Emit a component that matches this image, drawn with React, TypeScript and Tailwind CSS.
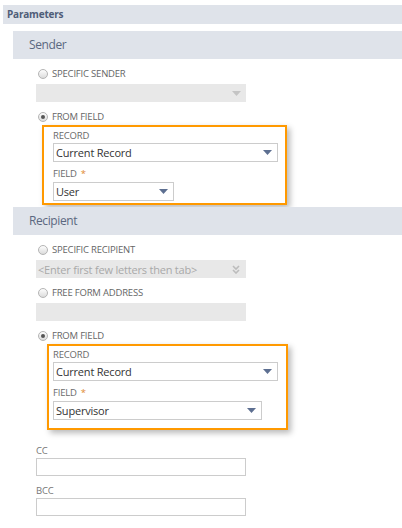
import React from 'react'

const font = { fontFamily: '"Open Sans", "Liberation Sans", sans-serif' }

function Radio({ checked, label }: { checked?: boolean; label: string }) {
  return (
    <div className="flex items-center h-[13px] pl-[2px]">
      <span className="w-[10px] h-[10px] rounded-full border border-[#b4b4b4] bg-gradient-to-b from-[#fdfdfd] to-[#dcdcdc] flex items-center justify-center">
        {checked && <span className="w-[4px] h-[4px] rounded-full bg-[#555]" />}
      </span>
      <span className="ml-[4px] text-[9.5px] tracking-[-0.2px] leading-[13px] text-[#666] uppercase">{label}</span>
    </div>
  )
}

function Arrow({ light }: { light?: boolean }) {
  return (
    <svg width="9" height="5" viewBox="0 0 9 5" className="shrink-0">
      <path d="M0 0h9L4.5 5z" fill={light ? '#c4c4c4' : '#5d6f91'} />
    </svg>
  )
}

function Select({ value, w }: { value: string; w: string }) {
  return (
    <div className={`${w} h-[19px] border border-[#cccccc] bg-white flex items-center justify-between pl-[2px] pr-[5px]`}>
      <span className="text-[11px] tracking-[-0.2px] leading-none text-[#333]">{value}</span>
      <Arrow />
    </div>
  )
}

function Label({ text, req }: { text: string; req?: boolean }) {
  return (
    <div className="h-[12px] text-[9.5px] tracking-[-0.2px] leading-[12px] text-[#6b6b6b] uppercase">
      {text}
      {req && <span className="ml-[4px] text-[#e0892f]">*</span>}
    </div>
  )
}

function FieldBox({ x, w, second }: { x: string; w: string; second?: boolean }) {
  return (
    <div className={`${x} ${w} mt-[2px] border-2 border-[#ff9900] shadow-[3px_3px_6px_rgba(0,0,0,0.28)] bg-white pt-[3px] ${second ? 'pl-[4px] pb-[8px]' : 'pl-[9px] pb-[2px]'}`}>
      <Label text="Record" />
      <div className="mt-[1px]">
        <Select value="Current Record" w="w-[225px]" />
      </div>
      <div className="mt-[6px]">
        <Label text="Field" req />
      </div>
      <div className="mt-[2px]">
        {second ? <Select value="Supervisor" w="w-[209px]" /> : <Select value="User" w="w-[121px]" />}
      </div>
    </div>
  )
}

function Header({ text }: { text: string }) {
  return (
    <div className="ml-[13px] h-[28px] bg-[#dfe3ea] flex items-center pl-[16px] text-[12px] tracking-[-0.4px] text-[#5b6880]">
      {text}
    </div>
  )
}

export default function App() {
  return (
    <div className="w-[402px] h-[528px] bg-white overflow-hidden pt-[5px]" style={font}>
      <div className="ml-[3px] h-[19px] bg-[#dfe3ea] flex items-center pl-[4px] text-[10px] tracking-[-0.2px] font-bold text-[#4f5d78]">
        Parameters
      </div>

      <div className="mt-[7px]">
        <Header text="Sender" />
        <div className="pl-[36px]">
          <div className="mt-[8px]"><Radio label="Specific Sender" /></div>
          <div className="mt-[4px] w-[210px] h-[18px] bg-[#e8e8e8] flex items-center justify-end pr-[5px]">
            <Arrow light />
          </div>
          <div className="mt-[8px]"><Radio checked label="From Field" /></div>
        </div>
        <FieldBox x="ml-[42px]" w="w-[245px]" />
      </div>

      <div className="mt-[2px]">
        <Header text="Recipient" />
        <div className="pl-[36px]">
          <div className="mt-[8px]"><Radio label="Specific Recipient" /></div>
          <div className="mt-[4px] w-[210px] h-[18px] bg-[#e8e8e8] flex items-center justify-between pl-[2px] pr-[6px]">
            <span className="text-[11px] tracking-[-0.2px] leading-none text-[#a8a8a8]">&lt;Enter first few letters then tab&gt;</span>
            <svg width="8" height="9" viewBox="0 0 8 9" className="shrink-0">
              <path d="M1 1l3 3 3-3M1 5l3 3 3-3" fill="none" stroke="#bcbcbc" strokeWidth="1.6" />
            </svg>
          </div>
          <div className="mt-[8px]"><Radio label="Free Form Address" /></div>
          <div className="mt-[4px] w-[210px] h-[18px] bg-[#e8e8e8]" />
          <div className="mt-[8px]"><Radio checked label="From Field" /></div>
        </div>
        <FieldBox x="ml-[47px]" w="w-[241px]" second />

        <div className="pl-[36px]">
          <div className="mt-[15px] h-[12px] text-[9.5px] tracking-[-0.2px] leading-[12px] text-[#777]">CC</div>
          <div className="mt-[1px] w-[210px] h-[18px] border border-[#cccccc] bg-white" />
          <div className="mt-[9px] h-[12px] text-[9.5px] tracking-[-0.2px] leading-[12px] text-[#777]">BCC</div>
          <div className="mt-[1px] w-[210px] h-[18px] border border-[#cccccc] bg-white" />
        </div>
      </div>
    </div>
  )
}
